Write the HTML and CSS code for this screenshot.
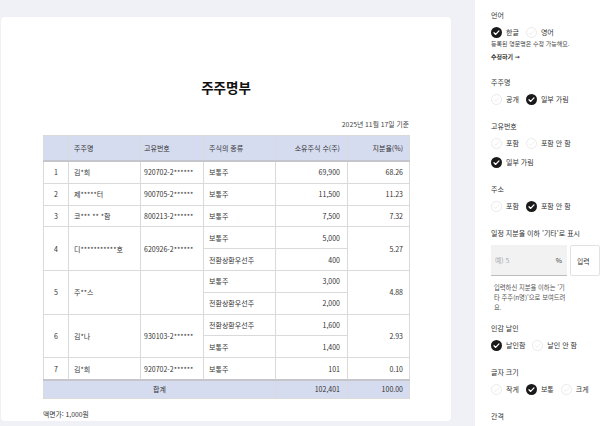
FILE: index.html
```html
<!DOCTYPE html>
<html lang="ko">
<head>
<meta charset="utf-8">
<link rel="stylesheet" href="styles.css">
</head>
<body>
<div class="stage">
  <div class="page">
    <h1 class="title">주주명부</h1>
    <div class="date">2025년 11월 17일 기준</div>
    <table class="register">
      <colgroup>
        <col class="c-no"><col class="c-name"><col class="c-id"><col class="c-type"><col class="c-qty"><col class="c-pct">
      </colgroup>
      <thead>
        <tr>
          <th></th><th class="l">주주명</th><th class="l id">고유번호</th><th class="l">주식의 종류</th><th class="r">소유주식 수(주)</th><th class="r pct">지분율(%)</th>
        </tr>
      </thead>
      <tbody>
        <tr><td class="c">1</td><td class="l">김*희</td><td class="l id">920702-2******</td><td class="l">보통주</td><td class="r">69,900</td><td class="r pct">68.26</td></tr>
        <tr><td class="c">2</td><td class="l">제*****터</td><td class="l id">900705-2******</td><td class="l">보통주</td><td class="r">11,500</td><td class="r pct">11.23</td></tr>
        <tr><td class="c">3</td><td class="l">코*** ** *함</td><td class="l id">800213-2******</td><td class="l">보통주</td><td class="r">7,500</td><td class="r pct">7.32</td></tr>
        <tr><td class="c" rowspan="2">4</td><td class="l" rowspan="2">디***********호</td><td class="l id" rowspan="2">620926-2******</td><td class="l">보통주</td><td class="r">5,000</td><td class="r pct" rowspan="2">5.27</td></tr>
        <tr><td class="l">전환상환우선주</td><td class="r">400</td></tr>
        <tr><td class="c" rowspan="2">5</td><td class="l" rowspan="2">주**스</td><td class="l id" rowspan="2"></td><td class="l">보통주</td><td class="r">3,000</td><td class="r pct" rowspan="2">4.88</td></tr>
        <tr><td class="l">전환상환우선주</td><td class="r">2,000</td></tr>
        <tr><td class="c" rowspan="2">6</td><td class="l" rowspan="2">김*나</td><td class="l id" rowspan="2">930103-2******</td><td class="l">전환상환우선주</td><td class="r">1,600</td><td class="r pct" rowspan="2">2.93</td></tr>
        <tr><td class="l">보통주</td><td class="r">1,400</td></tr>
        <tr><td class="c">7</td><td class="l">김*희</td><td class="l id">920702-2******</td><td class="l">보통주</td><td class="r">101</td><td class="r pct">0.10</td></tr>
      </tbody>
      <tfoot>
        <tr><td class="c" colspan="4">합계</td><td class="r">102,401</td><td class="r pct">100.00</td></tr>
      </tfoot>
    </table>
    <div class="par">액면가: 1,000원</div>
  </div>
</div>

<aside class="panel">
  <section class="group">
    <div class="label">언어</div>
    <div class="row">
      <span class="opt"><svg class="ico" viewBox="0 0 12 12"><circle cx="6" cy="6" r="6" fill="#1a1a1a"/><path d="M3.3 6.3l1.8 1.8 3.6-3.9" fill="none" stroke="#fff" stroke-width="1.4" stroke-linecap="round" stroke-linejoin="round"/></svg>한글</span>
      <span class="opt"><svg class="ico" viewBox="0 0 12 12"><circle cx="6" cy="6" r="5.5" fill="#fff" stroke="#e8e8e8"/><path d="M3.3 6.3l1.8 1.8 3.6-3.9" fill="none" stroke="#f3f3f3" stroke-width="1.1" stroke-linecap="round" stroke-linejoin="round"/></svg>영어</span>
    </div>
    <div class="note">등록된 영문명은 수정 가능해요.</div>
    <div class="link">수정하기 <span class="arrow">→</span></div>
  </section>

  <section class="group">
    <div class="label">주주명</div>
    <div class="row">
      <span class="opt"><svg class="ico" viewBox="0 0 12 12"><circle cx="6" cy="6" r="5.5" fill="#fff" stroke="#e8e8e8"/><path d="M3.3 6.3l1.8 1.8 3.6-3.9" fill="none" stroke="#f3f3f3" stroke-width="1.1" stroke-linecap="round" stroke-linejoin="round"/></svg>공개</span>
      <span class="opt"><svg class="ico" viewBox="0 0 12 12"><circle cx="6" cy="6" r="6" fill="#1a1a1a"/><path d="M3.3 6.3l1.8 1.8 3.6-3.9" fill="none" stroke="#fff" stroke-width="1.4" stroke-linecap="round" stroke-linejoin="round"/></svg>일부 가림</span>
    </div>
  </section>

  <section class="group">
    <div class="label">고유번호</div>
    <div class="row">
      <span class="opt"><svg class="ico" viewBox="0 0 12 12"><circle cx="6" cy="6" r="5.5" fill="#fff" stroke="#e8e8e8"/><path d="M3.3 6.3l1.8 1.8 3.6-3.9" fill="none" stroke="#f3f3f3" stroke-width="1.1" stroke-linecap="round" stroke-linejoin="round"/></svg>포함</span>
      <span class="opt"><svg class="ico" viewBox="0 0 12 12"><circle cx="6" cy="6" r="5.5" fill="#fff" stroke="#e8e8e8"/><path d="M3.3 6.3l1.8 1.8 3.6-3.9" fill="none" stroke="#f3f3f3" stroke-width="1.1" stroke-linecap="round" stroke-linejoin="round"/></svg>포함 안 함</span>
    </div>
    <div class="row second">
      <span class="opt"><svg class="ico" viewBox="0 0 12 12"><circle cx="6" cy="6" r="6" fill="#1a1a1a"/><path d="M3.3 6.3l1.8 1.8 3.6-3.9" fill="none" stroke="#fff" stroke-width="1.4" stroke-linecap="round" stroke-linejoin="round"/></svg>일부 가림</span>
    </div>
  </section>

  <section class="group">
    <div class="label">주소</div>
    <div class="row">
      <span class="opt"><svg class="ico" viewBox="0 0 12 12"><circle cx="6" cy="6" r="5.5" fill="#fff" stroke="#e8e8e8"/><path d="M3.3 6.3l1.8 1.8 3.6-3.9" fill="none" stroke="#f3f3f3" stroke-width="1.1" stroke-linecap="round" stroke-linejoin="round"/></svg>포함</span>
      <span class="opt"><svg class="ico" viewBox="0 0 12 12"><circle cx="6" cy="6" r="6" fill="#1a1a1a"/><path d="M3.3 6.3l1.8 1.8 3.6-3.9" fill="none" stroke="#fff" stroke-width="1.4" stroke-linecap="round" stroke-linejoin="round"/></svg>포함 안 함</span>
    </div>
  </section>

  <section class="group threshold">
    <div class="label">일정 지분율 이하 '기타'로 표시</div>
    <div class="input-row">
      <div class="field"><span class="ph">예) 5</span><span class="unit">%</span></div>
      <div class="btn">입력</div>
    </div>
    <div class="help">입력하신 지분율 이하는 '기<br>타 주주(n명)'으로 보여드려<br>요.</div>
  </section>

  <section class="group">
    <div class="label">인감 날인</div>
    <div class="row">
      <span class="opt"><svg class="ico" viewBox="0 0 12 12"><circle cx="6" cy="6" r="6" fill="#1a1a1a"/><path d="M3.3 6.3l1.8 1.8 3.6-3.9" fill="none" stroke="#fff" stroke-width="1.4" stroke-linecap="round" stroke-linejoin="round"/></svg>날인함</span>
      <span class="opt"><svg class="ico" viewBox="0 0 12 12"><circle cx="6" cy="6" r="5.5" fill="#fff" stroke="#e8e8e8"/><path d="M3.3 6.3l1.8 1.8 3.6-3.9" fill="none" stroke="#f3f3f3" stroke-width="1.1" stroke-linecap="round" stroke-linejoin="round"/></svg>날인 안 함</span>
    </div>
  </section>

  <section class="group">
    <div class="label">글자 크기</div>
    <div class="row">
      <span class="opt"><svg class="ico" viewBox="0 0 12 12"><circle cx="6" cy="6" r="5.5" fill="#fff" stroke="#e8e8e8"/><path d="M3.3 6.3l1.8 1.8 3.6-3.9" fill="none" stroke="#f3f3f3" stroke-width="1.1" stroke-linecap="round" stroke-linejoin="round"/></svg>작게</span>
      <span class="opt"><svg class="ico" viewBox="0 0 12 12"><circle cx="6" cy="6" r="6" fill="#1a1a1a"/><path d="M3.3 6.3l1.8 1.8 3.6-3.9" fill="none" stroke="#fff" stroke-width="1.4" stroke-linecap="round" stroke-linejoin="round"/></svg>보통</span>
      <span class="opt"><svg class="ico" viewBox="0 0 12 12"><circle cx="6" cy="6" r="5.5" fill="#fff" stroke="#e8e8e8"/><path d="M3.3 6.3l1.8 1.8 3.6-3.9" fill="none" stroke="#f3f3f3" stroke-width="1.1" stroke-linecap="round" stroke-linejoin="round"/></svg>크게</span>
    </div>
  </section>

  <section class="group">
    <div class="label">간격</div>
  </section>
</aside>
</body>
</html>
```

FILE: styles.css
```css
html, body {
  margin: 0;
  padding: 0;
}
body {
  width: 600px;
  height: 426px;
  overflow: hidden;
  display: flex;
  font-family: "Noto Sans CJK KR", "Noto Sans", sans-serif;
  color: #222;
  background: #fff;
}

/* left document preview */
.stage {
  width: 475px;
  flex: none;
  background: #f0f1f6;
  padding: 17px 0 0 1px;
  box-sizing: border-box;
}
.page {
  width: 450px;
  height: 404px;
  background: #fff;
  border-radius: 4px;
  padding: 60px 42px 0;
  box-sizing: border-box;
}
.title {
  margin: 0;
  font-size: 13.5px;
  line-height: 20px;
  font-weight: 700;
  text-align: center;
  color: #111;
}
.date {
  margin-top: 22px;
  font-size: 6.8px;
  line-height: 10px;
  text-align: right;
  color: #444;
}
.register {
  margin-top: 6px;
  width: 366px;
  table-layout: fixed;
  border-collapse: collapse;
  font-size: 7px;
  color: #333;
  border: 1px solid #d6d6d6;
}
.c-no { width: 25px; }
.c-name { width: 72px; }
.c-id { width: 63px; }
.c-type { width: 72px; }
.c-qty { width: 72px; }
.c-pct { width: 62px; }

.register th,
.register td {
  border: 1px solid #dadada;
  padding: 0 5px;
  line-height: 10px;
  font-weight: 400;
  white-space: nowrap;
  overflow: hidden;
}
.register thead th {
  background: #d6dcf0;
  height: 24px;
  border-bottom: 2px solid #c4c6cc;
  color: #333;
}
.register tbody td {
  height: 20.8px;
}
.register tfoot td {
  background: #d6dcf0;
  height: 17px;
  border-top: 2px solid #c4c6cc;
}
.register .l { text-align: left; }
.register .r { text-align: right; padding-right: 7px; }
.register .c { text-align: center; }
.register .id { padding-left: 3px; }
.register .pct { padding-right: 6px; }

.par {
  margin-top: 10px;
  font-size: 6.8px;
  line-height: 10px;
  color: #333;
}

/* right settings panel */
.panel {
  flex: 1;
  background: #fff;
  padding: 9px 0 0 16px;
  box-sizing: border-box;
  overflow: hidden;
}
.group {
  margin-bottom: 14px;
}
.label {
  font-size: 7px;
  line-height: 12px;
  color: #333;
  margin-bottom: 4px;
  white-space: nowrap;
}
.row {
  display: flex;
  align-items: center;
  height: 14px;
  gap: 7px;
}
.row.second {
  margin-top: 5px;
}
.opt {
  display: inline-flex;
  align-items: center;
  gap: 4px;
  font-size: 7px;
  color: #333;
  white-space: nowrap;
}
.ico {
  width: 11px;
  height: 11px;
  flex: none;
}
.note {
  font-size: 6px;
  line-height: 10px;
  color: #444;
  white-space: nowrap;
}
.link {
  margin-top: 3px;
  font-size: 6px;
  line-height: 10px;
  font-weight: 700;
  color: #333;
}
.arrow {
  font-family: "DejaVu Sans", sans-serif;
  font-size: 6px;
}

.threshold {
  margin-bottom: 9px;
}
.threshold .label {
  margin-bottom: 6px;
}
.input-row {
  display: flex;
  gap: 3px;
}
.field {
  width: 81px;
  height: 31px;
  background: #f2f2f3;
  border-bottom: 1px solid #bdbdbd;
  box-sizing: border-box;
  display: flex;
  align-items: center;
  justify-content: space-between;
  padding: 0 5px 0 4px;
  font-size: 6.8px;
}
.ph { color: #aaa; }
.unit { color: #444; }
.btn {
  width: 30px;
  height: 31px;
  box-sizing: border-box;
  border: 1px solid #e2e2e2;
  border-radius: 2px;
  display: flex;
  align-items: center;
  padding-left: 6px;
  font-size: 6.8px;
  color: #333;
  flex: none;
}
.help {
  margin-top: 7px;
  padding-left: 3px;
  font-size: 6.3px;
  line-height: 10px;
  color: #555;
  white-space: nowrap;
}
```
